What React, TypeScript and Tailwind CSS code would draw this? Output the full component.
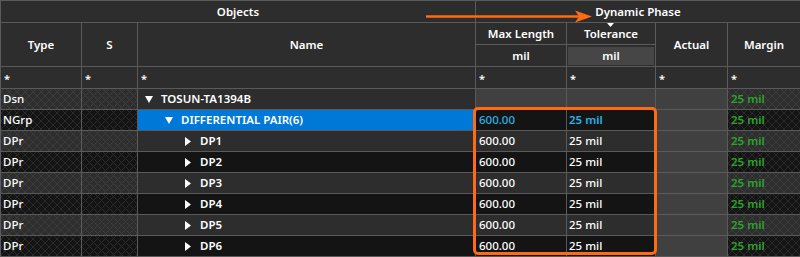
import React from "react";

const hatchLight =
  "bg-[#2e2e2e] bg-[image:repeating-linear-gradient(45deg,#3c3c3c_0_1px,transparent_1px_5.66px),repeating-linear-gradient(-45deg,#3c3c3c_0_1px,transparent_1px_5.66px)]";
const hatchDark =
  "bg-[#141414] bg-[image:repeating-linear-gradient(45deg,#2a2a2a_0_1px,transparent_1px_5.66px),repeating-linear-gradient(-45deg,#2a2a2a_0_1px,transparent_1px_5.66px)]";

function TriDown({ className = "" }: { className?: string }) {
  return (
    <svg width="8" height="7" viewBox="0 0 8 7" className={className}>
      <polygon points="0,0 8,0 4,7" fill="#ffffff" />
    </svg>
  );
}

function TriRight({ className = "" }: { className?: string }) {
  return (
    <svg width="6" height="9" viewBox="0 0 6 9" className={className}>
      <polygon points="0,0 6,4.5 0,9" fill="#ffffff" />
    </svg>
  );
}

type Row = {
  type: string;
  level: 0 | 1 | 2;
  name: string;
  dark: boolean;
  selected?: boolean;
  ml?: string;
  tol?: string;
  margin: string;
};

const rows: Row[] = [
  { type: "Dsn", level: 0, name: "TOSUN-TA1394B", dark: false, margin: "25 mil" },
  {
    type: "NGrp",
    level: 1,
    name: "DIFFERENTIAL PAIR(6)",
    dark: true,
    selected: true,
    ml: "600.00",
    tol: "25 mil",
    margin: "25 mil",
  },
  { type: "DPr", level: 2, name: "DP1", dark: false, ml: "600.00", tol: "25 mil", margin: "25 mil" },
  { type: "DPr", level: 2, name: "DP2", dark: true, ml: "600.00", tol: "25 mil", margin: "25 mil" },
  { type: "DPr", level: 2, name: "DP3", dark: false, ml: "600.00", tol: "25 mil", margin: "25 mil" },
  { type: "DPr", level: 2, name: "DP4", dark: true, ml: "600.00", tol: "25 mil", margin: "25 mil" },
  { type: "DPr", level: 2, name: "DP5", dark: false, ml: "600.00", tol: "25 mil", margin: "25 mil" },
  { type: "DPr", level: 2, name: "DP6", dark: true, ml: "600.00", tol: "25 mil", margin: "25 mil" },
];

const hdr = "bg-[#2d2d2d] flex items-center justify-center font-semibold text-white";

export default function App() {
  return (
    <div className="relative w-[800px] h-[257px] overflow-hidden bg-[#5a5a5a] font-['Noto_Sans',sans-serif] text-[11.5px] leading-none text-white">
      <div className="grid grid-cols-[80px_55px_337px_90px_88px_71px_72px] grid-rows-[21px_21px_21px_21px_repeat(8,20px)] gap-px pt-px pl-px pb-px">
        {/* group header row */}
        <div className={`${hdr} col-span-3`}>Objects</div>
        <div className={`${hdr} col-span-4`}>Dynamic Phase</div>

        {/* column header rows */}
        <div className={`${hdr} row-span-2`}>Type</div>
        <div className={`${hdr} row-span-2`}>S</div>
        <div className={`${hdr} row-span-2`}>Name</div>
        <div className={hdr}>Max Length</div>
        <div className={hdr}>Tolerance</div>
        <div className={`${hdr} row-span-2`}>Actual</div>
        <div className={`${hdr} row-span-2`}>Margin</div>
        <div className={hdr}>mil</div>
        <div className="bg-[#2d2d2d] px-px pt-[2px] pb-px">
          <div className="h-full w-full bg-[#464646] flex items-center justify-center font-semibold">mil</div>
        </div>

        {/* filter row */}
        {[0, 1, 2, 3, 4, 5, 6].map((i) => (
          <div key={i} className="bg-[#2d2d2d] flex items-center pl-[3px] pt-[2px] font-semibold text-[11px]">
            *
          </div>
        ))}

        {/* data rows */}
        {rows.map((r, idx) => {
          const base = r.dark ? "bg-[#141414]" : "bg-[#2d2d2d]";
          const hatch = r.dark ? hatchDark : hatchLight;
          const pad = r.level === 0 ? "pl-[7px]" : r.level === 1 ? "pl-[27px]" : "pl-[47px]";
          return (
            <React.Fragment key={idx}>
              <div className={`${hatch} flex items-center pl-[2px] font-medium`}>{r.type}</div>
              <div className={hatch} />
              <div
                className={`${r.selected ? "bg-[#0078d7]" : base} flex items-center ${pad} font-semibold`}
              >
                {r.level === 2 ? <TriRight className="mr-[9px]" /> : <TriDown className="mr-[8px]" />}
                <span>{r.name}</span>
              </div>
              <div
                className={`${r.ml ? base : "bg-[#404040]"} flex items-center pl-[3px] font-medium ${
                  r.selected ? "text-[#27b4e8]" : "text-white"
                }`}
              >
                {r.ml}
              </div>
              <div
                className={`${r.tol ? base : "bg-[#404040]"} flex items-center pl-[2px] ${
                  r.selected ? "text-[#27b4e8] font-semibold" : "text-white font-medium"
                }`}
              >
                {r.tol}
              </div>
              <div className="bg-[#404040]" />
              <div className={`${hatch} flex items-center pl-[3px] font-semibold text-[#2aa52a]`}>{r.margin}</div>
            </React.Fragment>
          );
        })}
      </div>

      {/* sort indicator */}
      <svg className="absolute left-[607px] top-[23px]" width="7" height="4" viewBox="0 0 7 4">
        <polygon points="0,0 7,0 3.5,4" fill="#ffffff" />
      </svg>

      {/* orange arrow */}
      <svg className="absolute left-[420px] top-[5px]" width="180" height="24" viewBox="0 0 180 24">
        <line x1="6" y1="11.5" x2="160" y2="11.5" stroke="#ff6a13" strokeWidth="2.5" />
        <polygon points="172,11.5 155,5.5 159,11.5 155,17.5" fill="#ff6a13" />
      </svg>

      {/* orange highlight */}
      <div className="absolute left-[473px] top-[107px] w-[184px] h-[148px] border-[3px] border-[#ff6a13] rounded-[5px]" />
    </div>
  );
}
